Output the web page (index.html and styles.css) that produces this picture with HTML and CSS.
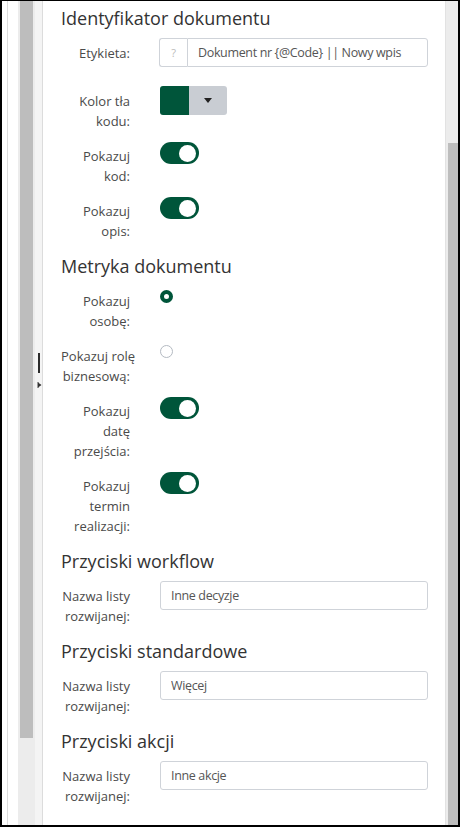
FILE: index.html
```html
<!DOCTYPE html>
<html lang="pl">
<head>
<meta charset="utf-8">
<title>Ustawienia dokumentu</title>
<link rel="stylesheet" href="styles.css">
</head>
<body>
<div class="window">
  <div class="gutter"></div>
  <div class="gutter-gap"></div>
  <div class="scroll-left"><div class="scroll-left-thumb"></div></div>
  <div class="splitter">
    <div class="splitter-bar"></div>
    <svg class="splitter-arrow" width="5" height="6" viewBox="0 0 5 6"><rect x="0" y="0" width="2" height="6" fill="#9a9a9a"/><path d="M1 0.5 L4.5 3 L1 5.5 Z" fill="#333"/></svg>
  </div>
  <main class="content">
    <section class="section">
      <h2 class="section-title">Identyfikator dokumentu</h2>
      <div class="row row--first">
        <label class="row-label">Etykieta:</label>
        <div class="input-group">
          <span class="addon">?</span>
          <input class="input input--grouped" type="text" value="Dokument nr {@Code} || Nowy wpis">
        </div>
      </div>
      <div class="row">
        <label class="row-label">Kolor tła<br>kodu:</label>
        <div class="color-picker">
          <span class="swatch"></span>
          <span class="picker-btn"><svg width="8" height="5" viewBox="0 0 8 5"><path d="M0 0 H8 L4 5 Z" fill="#222"/></svg></span>
        </div>
      </div>
      <div class="row">
        <label class="row-label">Pokazuj<br>kod:</label>
        <span class="switch"><span class="knob"></span></span>
      </div>
      <div class="row">
        <label class="row-label">Pokazuj<br>opis:</label>
        <span class="switch"><span class="knob"></span></span>
      </div>
    </section>

    <section class="section">
      <h2 class="section-title">Metryka dokumentu</h2>
      <div class="row">
        <label class="row-label">Pokazuj<br>osobę:</label>
        <span class="radio radio--checked"></span>
      </div>
      <div class="row">
        <label class="row-label">Pokazuj rolę<br>biznesową:</label>
        <span class="radio"></span>
      </div>
      <div class="row">
        <label class="row-label">Pokazuj<br>datę<br>przejścia:</label>
        <span class="switch"><span class="knob"></span></span>
      </div>
      <div class="row">
        <label class="row-label">Pokazuj<br>termin<br>realizacji:</label>
        <span class="switch"><span class="knob"></span></span>
      </div>
    </section>

    <section class="section">
      <h2 class="section-title">Przyciski workflow</h2>
      <div class="row">
        <label class="row-label">Nazwa listy<br>rozwijanej:</label>
        <input class="input" type="text" value="Inne decyzje">
      </div>
    </section>

    <section class="section">
      <h2 class="section-title">Przyciski standardowe</h2>
      <div class="row">
        <label class="row-label">Nazwa listy<br>rozwijanej:</label>
        <input class="input" type="text" value="Więcej">
      </div>
    </section>

    <section class="section">
      <h2 class="section-title">Przyciski akcji</h2>
      <div class="row">
        <label class="row-label">Nazwa listy<br>rozwijanej:</label>
        <input class="input" type="text" value="Inne akcje">
      </div>
    </section>
  </main>
  <div class="scroll-right"><div class="scroll-right-thumb"></div></div>
</div>
</body>
</html>
```
FILE: styles.css
```css
* { box-sizing: border-box; }

html, body {
  margin: 0;
  padding: 0;
  background: #fff;
}

body {
  font-family: "Open Sans", "Liberation Sans", sans-serif;
  color: #444;
}

.window {
  width: 460px;
  height: 827px;
  border-style: solid;
  border-color: #000;
  border-width: 1px 2px 2px 2px;
  display: flex;
  overflow: hidden;
}

.gutter {
  width: 6px;
  border-right: 1px solid #dcdcdc;
  background: #fff;
  flex: none;
}

.gutter-gap {
  width: 10px;
  flex: none;
  background: #fff;
}

.scroll-left {
  width: 17px;
  flex: none;
  background: #ececec;
  padding: 0 2px;
}

.scroll-left-thumb {
  height: 737px;
  background: #bdbdbd;
}

.splitter {
  width: 8px;
  flex: none;
  background: #f4f4f4;
  border-right: 1px solid #dcdcdc;
  display: flex;
  flex-direction: column;
  align-items: flex-start;
}

.splitter-bar {
  width: 2px;
  height: 20px;
  margin-top: 352px;
  margin-left: 3px;
  background: #2b2b2b;
}

.splitter-arrow {
  margin-top: 9px;
  margin-left: 2px;
  display: block;
}

.content {
  flex: 1;
  min-width: 0;
  padding: 4px 17px 0 18px;
  background: #fff;
}

.section-title {
  margin: 0 0 7px 0;
  font-size: 18px;
  line-height: 26px;
  font-weight: 400;
  color: #333;
}

.section + .section {
  margin-top: 12px;
}

.row {
  display: flex;
  align-items: flex-start;
  margin-bottom: 10px;
}

.section .row:last-child {
  margin-bottom: 0;
}

.row--first {
  margin-bottom: 19px;
}

.row-label {
  width: 69px;
  flex: none;
  margin-right: 30px;
  padding-top: 5px;
  text-align: right;
  white-space: nowrap;
  font-size: 13px;
  line-height: 20px;
  color: #4a4a4a;
}

.input {
  flex: 1;
  min-width: 0;
  height: 29px;
  border: 1px solid #cfd3d9;
  border-radius: 3px;
  padding: 0 10px;
  font-family: "Open Sans", "Liberation Sans", sans-serif;
  font-size: 12.5px;
  letter-spacing: -0.35px;
  color: #555;
  background: #fff;
  outline: none;
}

.input-group {
  flex: 1;
  min-width: 0;
  display: flex;
  margin-left: -1px;
}

.addon {
  width: 28px;
  height: 29px;
  flex: none;
  border: 1px solid #cfd3d9;
  border-right: none;
  border-radius: 3px 0 0 3px;
  display: flex;
  align-items: center;
  justify-content: center;
  font-size: 11px;
  color: #bbb;
}

.input--grouped {
  border-radius: 0 3px 3px 0;
}

.color-picker {
  display: flex;
  width: 67px;
  height: 29px;
  border-radius: 3px;
  overflow: hidden;
}

.swatch {
  width: 29px;
  background: #00553a;
}

.picker-btn {
  flex: 1;
  background: #c9cdd3;
  display: flex;
  align-items: center;
  justify-content: center;
}

.switch {
  width: 39px;
  height: 22px;
  margin-top: 1px;
  border-radius: 11px;
  background: #00553a;
  display: flex;
  align-items: center;
  justify-content: flex-end;
  padding-right: 3px;
}

.knob {
  width: 17px;
  height: 17px;
  border-radius: 50%;
  background: #fff;
}

.radio {
  width: 13px;
  height: 13px;
  margin-top: 4px;
  border-radius: 50%;
  border: 1px solid #b4bac2;
  background: #fff;
}

.radio--checked {
  border: 4px solid #00553a;
}

.scroll-right {
  width: 13px;
  flex: none;
  border-left: 1px solid #e2e2e2;
  background: #ececec;
  padding-left: 2px;
  padding-top: 142px;
}

.scroll-right-thumb {
  height: 100%;
  background: #bdbdbd;
}
```
